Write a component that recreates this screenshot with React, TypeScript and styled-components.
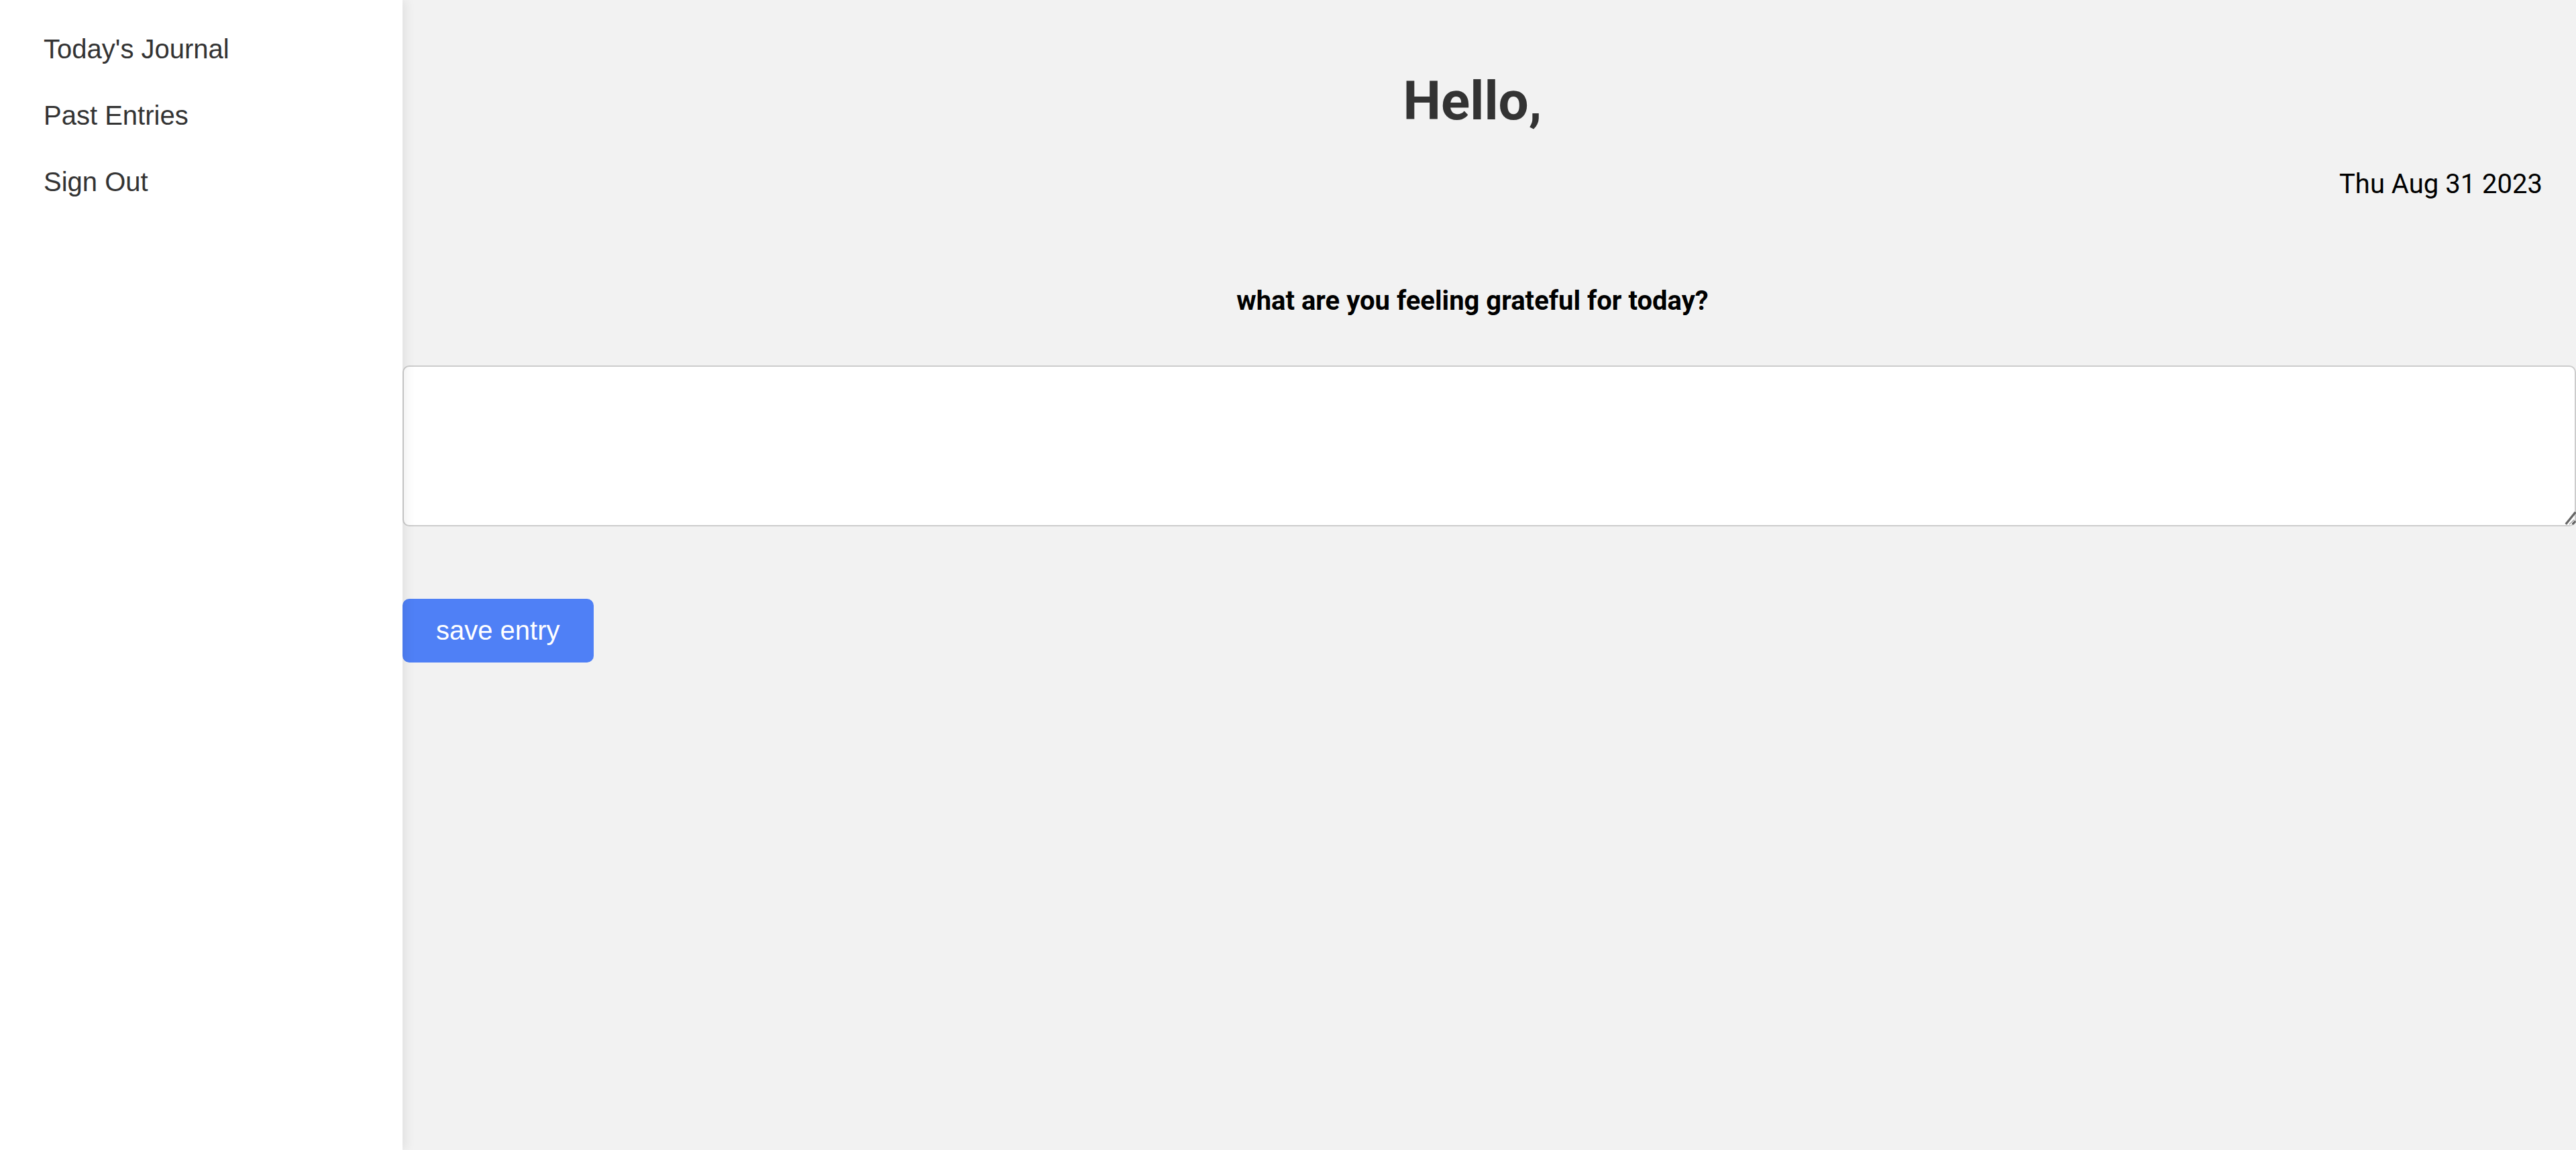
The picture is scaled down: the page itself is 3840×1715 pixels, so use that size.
import React from "react";
import styled, { createGlobalStyle } from "styled-components";

const GlobalStyle = createGlobalStyle`
  html, body {
    height: 100%;
    margin: 0;
    padding: 0;
    overflow: hidden;
    background: #f2f2f2;
  }
  body {
    font-family: "Liberation Sans", Arial, sans-serif;
  }
  #root {
    height: 100%;
  }
  * {
    box-sizing: border-box;
  }
`;

const Page = styled.div`
  zoom: 2.5;
  display: flex;
  height: 100%;
  background: #f2f2f2;
`;

const Sidebar = styled.nav`
  position: relative;
  z-index: 1;
  flex: none;
  width: 240px;
  padding-top: 9.5px;
  background: #ffffff;
  box-shadow: 2px 0 6px rgba(0, 0, 0, 0.07);
  display: flex;
  flex-direction: column;
`;

const NavLink = styled.a`
  display: block;
  padding: 10px 26px;
  font-family: "Liberation Sans", Arial, sans-serif;
  font-size: 16px;
  line-height: 19.6px;
  color: #333333;
  text-decoration: none;
  cursor: pointer;
`;

const Main = styled.main`
  flex: 1;
  min-width: 0;
  padding-top: 20px;
  display: flex;
  flex-direction: column;
  align-items: flex-start;
`;

const Header = styled.header`
  align-self: stretch;
  padding-right: 20px;
  font-family: Roboto, "Noto Sans", sans-serif;
`;

const Title = styled.h1`
  margin: 21.44px 0;
  font-family: Roboto, "Noto Sans", sans-serif;
  font-size: 32px;
  font-weight: 700;
  color: #333333;
  text-align: center;
`;

const DateText = styled.p`
  margin: 0;
  font-size: 16px;
  color: #000000;
  text-align: right;
`;

const Prompt = styled.p`
  margin: 50.7px 0 0;
  font-size: 16px;
  font-weight: 700;
  color: #000000;
  text-align: center;
`;

const EntryField = styled.div`
  position: relative;
  align-self: stretch;
  margin-top: 29.4px;
`;

const EntryBox = styled.textarea`
  display: block;
  width: 100%;
  height: 96px;
  margin: 0;
  padding: 10px;
  border: 1px solid #cccccc;
  border-radius: 4px;
  background: #ffffff;
  font-family: "Liberation Sans", Arial, sans-serif;
  font-size: 16px;
  color: #333333;
  resize: both;
  outline: none;
`;

const Resizer = styled.svg`
  position: absolute;
  right: 0;
  bottom: 0;
  width: 8px;
  height: 10px;
  pointer-events: none;
`;

const SaveButton = styled.button`
  margin-top: 43.2px;
  padding: 10px 20px;
  border: none;
  border-radius: 4px;
  background: #4f80f6;
  color: #ffffff;
  font-family: "Liberation Sans", Arial, sans-serif;
  font-size: 16px;
  line-height: normal;
  cursor: pointer;
`;

const navItems = ["Today's Journal", "Past Entries", "Sign Out"];

export default function App() {
  return (
    <>
      <GlobalStyle />
      <Page>
        <Sidebar>
          {navItems.map((item) => (
            <NavLink key={item}>{item}</NavLink>
          ))}
        </Sidebar>
        <Main>
          <Header>
            <Title>Hello,</Title>
            <DateText>Thu Aug 31 2023</DateText>
            <Prompt>what are you feeling grateful for today?</Prompt>
          </Header>
          <EntryField>
            <EntryBox />
            <Resizer viewBox="0 0 8 10" aria-hidden="true">
              <line x1="1.9" y1="8.7" x2="7.7" y2="1.5" stroke="#666666" strokeWidth="1.3" />
              <line x1="5.9" y1="8.7" x2="7.7" y2="6.9" stroke="#666666" strokeWidth="1.3" />
            </Resizer>
          </EntryField>
          <SaveButton>save entry</SaveButton>
        </Main>
      </Page>
    </>
  );
}
